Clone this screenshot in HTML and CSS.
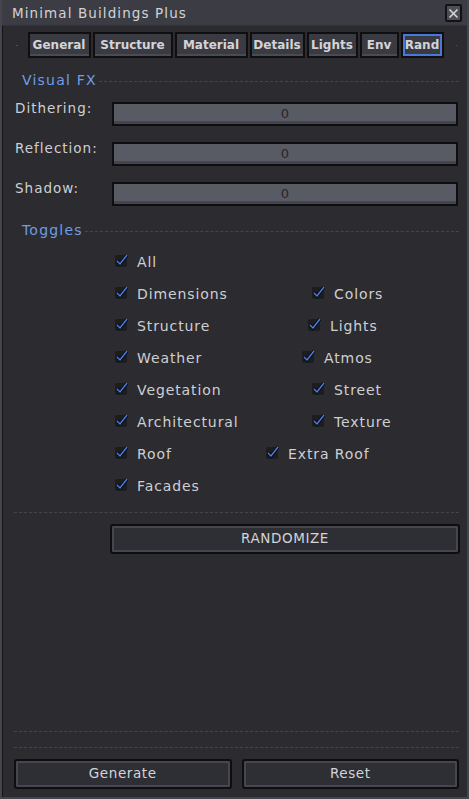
FILE: index.html
```html
<!DOCTYPE html>
<html>
<head>
<meta charset="utf-8">
<link rel="stylesheet" href="styles.css">
</head>
<body>
<div class="window">
  <div class="titlebar">
    <span class="title">Minimal Buildings Plus</span>
    <button class="close"><svg width="11" height="11" viewBox="0 0 11 11"><path d="M1.5 1.5 L9.5 9.5 M9.5 1.5 L1.5 9.5" stroke="#d8d8d8" stroke-width="1.6" fill="none"/></svg></button>
  </div>
  <div class="body">
    <div class="tabs-row">
      <span class="mark"></span>
      <div class="tabs">
        <span class="tab w-general">General</span>
        <span class="tab w-structure">Structure</span>
        <span class="tab w-material">Material</span>
        <span class="tab w-details">Details</span>
        <span class="tab w-lights">Lights</span>
        <span class="tab w-env">Env</span>
        <span class="tab w-rand active">Rand</span>
      </div>
      <span class="mark"></span>
    </div>

    <div class="group-head gh-fx"><span class="gh-label">Visual FX</span><span class="dash"></span></div>
    <div class="sliders">
      <div class="slider-row"><span class="slabel">Dithering:</span><div class="slider">0</div></div>
      <div class="slider-row"><span class="slabel">Reflection:</span><div class="slider">0</div></div>
      <div class="slider-row"><span class="slabel">Shadow:</span><div class="slider">0</div></div>
    </div>

    <div class="group-head gh-tg"><span class="gh-label">Toggles</span><span class="dash"></span></div>
    <div class="toggles">
      <div class="trow"><label class="chk"><svg class="box" width="16" height="16" viewBox="0 0 16 16"><rect x="1" y="3" width="12" height="12" rx="2" fill="#1d1d21"/><polyline points="3,9 6,12 13,3" fill="none" stroke="#0c0c0e" stroke-width="3.2"/><polyline points="3,9 6,12 13,3" fill="none" stroke="#4d7fe6" stroke-width="1.4"/></svg>All</label></div>
      <div class="trow"><label class="chk l"><svg class="box" width="16" height="16" viewBox="0 0 16 16"><rect x="1" y="3" width="12" height="12" rx="2" fill="#1d1d21"/><polyline points="3,9 6,12 13,3" fill="none" stroke="#0c0c0e" stroke-width="3.2"/><polyline points="3,9 6,12 13,3" fill="none" stroke="#4d7fe6" stroke-width="1.4"/></svg>Dimensions</label><label class="chk"><svg class="box" width="16" height="16" viewBox="0 0 16 16"><rect x="1" y="3" width="12" height="12" rx="2" fill="#1d1d21"/><polyline points="3,9 6,12 13,3" fill="none" stroke="#0c0c0e" stroke-width="3.2"/><polyline points="3,9 6,12 13,3" fill="none" stroke="#4d7fe6" stroke-width="1.4"/></svg>Colors</label></div>
      <div class="trow"><label class="chk l"><svg class="box" width="16" height="16" viewBox="0 0 16 16"><rect x="1" y="3" width="12" height="12" rx="2" fill="#1d1d21"/><polyline points="3,9 6,12 13,3" fill="none" stroke="#0c0c0e" stroke-width="3.2"/><polyline points="3,9 6,12 13,3" fill="none" stroke="#4d7fe6" stroke-width="1.4"/></svg>Structure</label><label class="chk r-lights"><svg class="box" width="16" height="16" viewBox="0 0 16 16"><rect x="1" y="3" width="12" height="12" rx="2" fill="#1d1d21"/><polyline points="3,9 6,12 13,3" fill="none" stroke="#0c0c0e" stroke-width="3.2"/><polyline points="3,9 6,12 13,3" fill="none" stroke="#4d7fe6" stroke-width="1.4"/></svg>Lights</label></div>
      <div class="trow"><label class="chk l"><svg class="box" width="16" height="16" viewBox="0 0 16 16"><rect x="1" y="3" width="12" height="12" rx="2" fill="#1d1d21"/><polyline points="3,9 6,12 13,3" fill="none" stroke="#0c0c0e" stroke-width="3.2"/><polyline points="3,9 6,12 13,3" fill="none" stroke="#4d7fe6" stroke-width="1.4"/></svg>Weather</label><label class="chk r-atmos"><svg class="box" width="16" height="16" viewBox="0 0 16 16"><rect x="1" y="3" width="12" height="12" rx="2" fill="#1d1d21"/><polyline points="3,9 6,12 13,3" fill="none" stroke="#0c0c0e" stroke-width="3.2"/><polyline points="3,9 6,12 13,3" fill="none" stroke="#4d7fe6" stroke-width="1.4"/></svg>Atmos</label></div>
      <div class="trow"><label class="chk l"><svg class="box" width="16" height="16" viewBox="0 0 16 16"><rect x="1" y="3" width="12" height="12" rx="2" fill="#1d1d21"/><polyline points="3,9 6,12 13,3" fill="none" stroke="#0c0c0e" stroke-width="3.2"/><polyline points="3,9 6,12 13,3" fill="none" stroke="#4d7fe6" stroke-width="1.4"/></svg>Vegetation</label><label class="chk"><svg class="box" width="16" height="16" viewBox="0 0 16 16"><rect x="1" y="3" width="12" height="12" rx="2" fill="#1d1d21"/><polyline points="3,9 6,12 13,3" fill="none" stroke="#0c0c0e" stroke-width="3.2"/><polyline points="3,9 6,12 13,3" fill="none" stroke="#4d7fe6" stroke-width="1.4"/></svg>Street</label></div>
      <div class="trow"><label class="chk l"><svg class="box" width="16" height="16" viewBox="0 0 16 16"><rect x="1" y="3" width="12" height="12" rx="2" fill="#1d1d21"/><polyline points="3,9 6,12 13,3" fill="none" stroke="#0c0c0e" stroke-width="3.2"/><polyline points="3,9 6,12 13,3" fill="none" stroke="#4d7fe6" stroke-width="1.4"/></svg>Architectural</label><label class="chk"><svg class="box" width="16" height="16" viewBox="0 0 16 16"><rect x="1" y="3" width="12" height="12" rx="2" fill="#1d1d21"/><polyline points="3,9 6,12 13,3" fill="none" stroke="#0c0c0e" stroke-width="3.2"/><polyline points="3,9 6,12 13,3" fill="none" stroke="#4d7fe6" stroke-width="1.4"/></svg>Texture</label></div>
      <div class="trow"><label class="chk l"><svg class="box" width="16" height="16" viewBox="0 0 16 16"><rect x="1" y="3" width="12" height="12" rx="2" fill="#1d1d21"/><polyline points="3,9 6,12 13,3" fill="none" stroke="#0c0c0e" stroke-width="3.2"/><polyline points="3,9 6,12 13,3" fill="none" stroke="#4d7fe6" stroke-width="1.4"/></svg>Roof</label><label class="chk r-extra"><svg class="box" width="16" height="16" viewBox="0 0 16 16"><rect x="1" y="3" width="12" height="12" rx="2" fill="#1d1d21"/><polyline points="3,9 6,12 13,3" fill="none" stroke="#0c0c0e" stroke-width="3.2"/><polyline points="3,9 6,12 13,3" fill="none" stroke="#4d7fe6" stroke-width="1.4"/></svg>Extra Roof</label></div>
      <div class="trow"><label class="chk"><svg class="box" width="16" height="16" viewBox="0 0 16 16"><rect x="1" y="3" width="12" height="12" rx="2" fill="#1d1d21"/><polyline points="3,9 6,12 13,3" fill="none" stroke="#0c0c0e" stroke-width="3.2"/><polyline points="3,9 6,12 13,3" fill="none" stroke="#4d7fe6" stroke-width="1.4"/></svg>Facades</label></div>
    </div>

    <div class="dash-line dl-1"></div>
    <div class="rand-row"><button class="btn rand-btn">RANDOMIZE</button></div>

    <div class="spacer"></div>
    <div class="dash-line"></div>
    <div class="dash-line dl-gap"></div>
    <div class="bottom">
      <button class="btn">Generate</button>
      <button class="btn">Reset</button>
    </div>
  </div>
</div>
</body>
</html>
```
FILE: styles.css
```css
* { box-sizing: border-box; }
html, body { margin: 0; padding: 0; background: #2b2b30; }
body { width: 469px; height: 799px; overflow: hidden; font-family: "DejaVu Sans", sans-serif; font-size: 13px; color: #cfcfd2; }

.window {
  width: 469px; height: 799px;
  display: flex; flex-direction: column;
  background: #2b2b30;
  border-left: 2px solid #45464d;
  border-right: 2px solid #45464d;
  border-bottom: 2px solid #45464d;
}

.titlebar {
  height: 26px; flex: none;
  background: #3c3d44;
  display: flex; align-items: center; justify-content: space-between;
  padding: 0 5px 0 10px;
  border-bottom: 1px solid #313238;
}
.title { font-size: 13.5px; color: #d2d2d6; letter-spacing: 1.1px; }
.close {
  width: 17px; height: 18px; padding: 0; margin-top: 1px;
  background: #4c4d55; border: 2px solid #121215; border-radius: 2px;
  display: flex; align-items: center; justify-content: center;
}

.body {
  flex: 1;
  display: flex; flex-direction: column;
  border-left: 1px solid #141417;
  padding: 0 8px 0 11px;
}

.tabs-row { display: flex; align-items: center; justify-content: space-between; margin-top: 6px; height: 26px; }
.mark { width: 4px; height: 1px; background: #505158; margin: 0 2px; }
.tabs { display: flex; gap: 2px; margin-left: 8px; margin-right: 10px; flex: 1; }
.tab {
  height: 26px;
  display: flex; align-items: center; justify-content: center;
  background: #3a3b42;
  border: 2px solid #0f0f12;
  box-shadow: inset 0 -2px 0 #4b4c53;
  font-weight: bold; font-size: 12px; color: #d4d4d8;
  padding-bottom: 1px;
}
.tab.active { border-color: #0f0f12; box-shadow: inset 0 0 0 2px #4a78d6; }
.w-general { width: 63px; }
.w-structure { width: 80px; }
.w-material { width: 73px; }
.w-details { width: 55px; }
.w-lights { width: 51px; }
.w-env { width: 39px; }
.w-rand { width: 43px; }

.group-head { display: flex; align-items: center; height: 16px; }
.gh-fx { margin-top: 14px; }
.gh-tg { margin-top: 16px; }
.gh-label { color: #6f9de6; font-size: 14px; padding: 0 2px 0 8px; letter-spacing: 1.2px; }
.dash { flex: 1; border-top: 1px dashed #45464d; margin-top: 2px; }

.sliders { display: flex; flex-direction: column; gap: 16px; margin-top: 14px; }
.slider-row { display: flex; align-items: flex-start; }
.slabel { width: 98px; padding-left: 1px; margin-top: -2px; font-size: 13.5px; color: #cfcfd2; letter-spacing: 1px; }
.slider {
  flex: 1; height: 24px; margin-right: 1px;
  background: #595b64;
  border: 2px solid #0e0e10;
  box-shadow: inset 0 -3px 0 #45464d;
  display: flex; align-items: center; justify-content: center;
  color: #26262b; font-size: 13px; padding-bottom: 2px;
}

.toggles { display: flex; flex-direction: column; margin-top: 8px; padding-left: 100px; }
.trow { height: 32px; display: flex; align-items: center; }
.chk { display: flex; align-items: center; font-size: 14px; color: #cfcfd2; letter-spacing: 0.9px; flex: none; }
.chk.l { width: 197px; }
.box { margin-right: 7px; margin-top: -4px; flex: none; }
.r-lights { margin-left: -4px; }
.r-atmos { margin-left: -10px; }
.r-extra { margin-left: -46px; }

.dash-line { border-top: 1px dashed #45464d; height: 0; }
.dl-1 { margin-top: 10px; }
.rand-row { margin-top: 11px; padding-left: 96px; margin-right: -1px; }
.btn {
  width: 100%; height: 30px;
  background: #2e2f35;
  border: 2px solid #0e0e10; border-radius: 3px;
  box-shadow: inset 0 0 0 2px #46474e;
  color: #d4d4d8; font-family: "DejaVu Sans", sans-serif; font-size: 13.5px; letter-spacing: 0.6px;
  padding: 0 0 2px 0;
}
.spacer { flex: 1; }
.dl-gap { margin-top: 15px; }
.bottom { display: grid; grid-template-columns: 1fr 1fr; gap: 10px; margin: 11px 0 8px 0; }
```
